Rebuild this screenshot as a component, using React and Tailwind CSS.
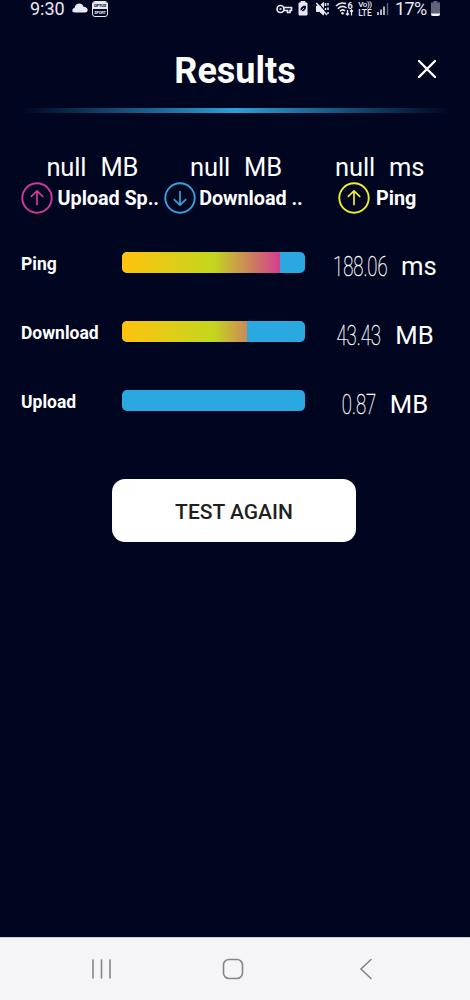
import React from "react";

function StatusBar() {
  return (
    <div className="flex h-[18px] items-start justify-between pl-[30px] pr-[30px] text-[#e9e9f3]">
      <div className="flex">
        <span className="w-[36px] text-[18px] leading-[18px]">9:30</span>
        <svg className="ml-[6px] mt-[3px]" width="16" height="10" viewBox="0 0 16 10" fill="currentColor">
          <path d="M3 9.5C1.2 9.5.3 8.500.3 7.200.3 6 1.200 5 2.500 4.900 3 2 5 .5 7.300.5 9.500.5 11 1.800 11.600 3.800 14 3.800 15.700 5.200 15.700 7 15.700 8.600 14.700 9.500 13 9.500Z" />
        </svg>
        <span className="ml-[4px] mt-px flex h-[16px] w-[16px] flex-col overflow-hidden rounded-[3px] border border-[#e9e9f3] text-center text-[4px] font-bold leading-[7px]">
          <span className="h-[7px] bg-[#e9e9f3] tracking-[-0.2px] text-[#000520]">OPTUS</span>
          <span className="tracking-[-0.2px]">SPORT</span>
        </span>
      </div>
      <div className="flex">
        <svg width="119" height="18" viewBox="0 0 119 18" fill="none" stroke="currentColor">
          <g strokeWidth="1.700">
            <circle cx="4.500" cy="9" r="3.500" />
            <path d="M7.500 7.500H15.500V10.500H14V12.500H11.500V10.500H7.500" />
            <path d="M3.500 9H5.500" />
          </g>
          <path d="M25 3V1.500H29V3H31V15H23V3Z" fill="currentColor" />
          <path d="M25 10.500C24.500 7.500 26.500 6 29.500 6 30 9.500 28 11.500 25.500 10.500Z" fill="#000520" stroke="#000520" strokeWidth=".8" />
          <path d="M24.500 11.500 28 8" strokeWidth=".8" />
          <path d="M40.500 6H43.500L47.500 2.500V15L43.500 11.500H40.500Z" fill="currentColor" />
          <path d="M41 1.500 52 14" stroke="#000520" strokeWidth="1.200" />
          <path d="M40.300 3 51 15" strokeWidth="1.500" />
          <path d="M49.500 3V6M49.500 8V10M52 3V5.500M52 7.500V10M52 12V14" strokeWidth="1.500" />
          <path d="M60 6C63 3 67 2.500 70 3.800M61.800 8.700C64.500 6 68 6 70.500 8M64 11.300C65.500 9.700 67.500 9.700 69 11" strokeWidth="1.600" />
          <circle cx="66.500" cy="13.300" r="1.300" fill="currentColor" stroke="none" />
          <path d="M71.500 10V15M70 13.500 71.500 15 73 13.500M75.500 15.500V10M74 11.500 75.500 10 77 11.500" strokeWidth="1.300" />
          <text x="71.500" y="8.500" fontSize="9" fontWeight="700" fill="currentColor" stroke="none">6</text>
        </svg>
        <span className="ml-[-37px] mt-px flex h-[16px] w-[14px] flex-col items-center text-[8px] font-medium">
          <span className="h-[8px] leading-[8px] tracking-[-0.4px]">Vo))</span>
          <span className="h-[8px] text-[8.5px] leading-[8px]">LTE</span>
        </span>
        <svg className="ml-[4px]" width="15" height="18" viewBox="0 0 15 18" stroke="currentColor" strokeWidth="1.500">
          <path d="M2 12V15M5 9.500V15M8 6.500V15" />
          <path d="M11.500 3V15" opacity=".4" />
        </svg>
        <span className="ml-[4px] w-[35px] whitespace-nowrap text-[18px] leading-[18px] tracking-[-0.6px]">17%</span>
        <svg className="ml-px mt-px" width="9" height="15" viewBox="0 0 9 15">
          <path d="M2.500 0H6.500V1.500H9V13Q9 15 7 15H2Q0 15 0 13V1.500H2.500Z" fill="#62627a" />
          <path d="M0 12.500H9V13Q9 15 7 15H2Q0 15 0 13Z" fill="#f3f3f8" />
        </svg>
      </div>
    </div>
  );
}

function ArrowCircle({ color, down = false }) {
  return (
    <svg className="shrink-0" width="32" height="32" viewBox="0 0 32 32" fill="none" stroke={color}>
      <circle cx="16" cy="16" r="14.700" strokeWidth="1.900" />
      <path
        d={down ? "M16 9V23M9.800 17.200 16 23 22.200 17.200" : "M16 23.300V9M9.800 14.800 16 9 22.200 14.800"}
        strokeWidth="1.700"
      />
    </svg>
  );
}

function Summary({ unit, label, color, down, gap }) {
  return (
    <div className="flex flex-col items-center">
      <div className="flex h-[30px] gap-[14px] pl-[5px] text-[25.5px] leading-[30px] tracking-[-0.15px]">
        <span>null</span>
        <span>{unit}</span>
      </div>
      <div className={`flex h-[32px] items-center whitespace-nowrap text-[19.8px] font-bold tracking-[-0.05px] ${gap}`}>
        <ArrowCircle color={color} down={down} />
        <span className="pt-px leading-[33px]">{label}</span>
      </div>
    </div>
  );
}

function Meter({ label, value, unit, fill, numberBox }) {
  return (
    <div className="flex h-[69px] items-start">
      <span className="w-[101px] text-[17.5px] font-bold leading-[27px]">{label}</span>
      <div className="mt-px h-[21px] w-[183px] overflow-hidden rounded-[5px] bg-[#2aa9e0]">
        <div className={`h-full overflow-hidden ${fill}`}>
          <div className="h-full w-[158px] bg-[linear-gradient(90deg,#ffc20e_0%,#c4d61e_58%,#d43d91_100%)]" />
        </div>
      </div>
      <div className="flex h-[32px] w-[160px] justify-center gap-[14px] leading-[31px]">
        <span className={`flex justify-center ${numberBox}`}>
          <span className="origin-center scale-x-[0.66] whitespace-nowrap text-[28px] font-thin [-webkit-text-stroke:0.35px_white]">{value}</span>
        </span>
        <span className="text-[25.7px]">{unit}</span>
      </div>
    </div>
  );
}

export default function App() {
  return (
    <main className="flex h-[1000px] w-[470px] flex-col overflow-hidden bg-[#000520] font-['Roboto',sans-serif] text-white">
      <StatusBar />
      <header className="flex h-[90px] items-start pl-[33px] pr-[33px] pt-[32px]">
        <span className="w-[20px]" />
        <h1 className="flex-1 text-center text-[36px] font-bold leading-[42px]">Results</h1>
        <svg className="mt-[9px]" width="20" height="20" viewBox="0 0 20 20" fill="none" stroke="white" strokeWidth="2.400" strokeLinecap="round">
          <path d="M2 2 18 18M18 2 2 18" />
        </svg>
      </header>
      <div className="mx-[20px] h-[5px] bg-[linear-gradient(90deg,transparent,#2d9ed8_50%,transparent)]" />
      <section className="ml-[18px] mt-[39px] grid w-[431px] grid-cols-3">
        <Summary unit="MB" label="Upload Sp.." color="#d43a9b" gap="gap-[5px]" />
        <Summary unit="MB" label="Download .." color="#36a3dc" gap="gap-[3px]" down />
        <Summary unit="ms" label="Ping" color="#f0f02c" gap="gap-[6px]" />
      </section>
      <section className="ml-[21px] mt-[37px] flex flex-col">
        <Meter label="Ping" value="188.06" unit="ms" fill="w-[158px]" numberBox="w-[54px]" />
        <Meter label="Download" value="43.43" unit="MB" fill="w-[125px]" numberBox="w-[45px]" />
        <Meter label="Upload" value="0.87" unit="MB" fill="w-0" numberBox="w-[34px]" />
      </section>
      <button className="ml-[112px] mt-[21px] h-[63px] w-[244px] rounded-[13px] bg-white pt-[3px] text-[21px] font-medium leading-[25px] text-[#1f1f1f]">
        TEST AGAIN
      </button>
      <nav className="mt-auto flex h-[63px] items-center border-t border-[#cfd0d6] bg-[#f5f5f8] pl-[91px]">
        <svg width="21" height="22" viewBox="0 0 21 22" stroke="#858587" strokeWidth="1.600" strokeLinecap="round">
          <path d="M2 2V20M10.500 2V20M19 2V20" />
        </svg>
        <svg className="ml-[110px]" width="22" height="22" viewBox="0 0 22 22" fill="none" stroke="#858587" strokeWidth="1.600">
          <rect x="1.500" y="1.500" width="19" height="19" rx="5.500" />
        </svg>
        <svg className="ml-[115px]" width="14" height="22" viewBox="0 0 14 22" fill="none" stroke="#858587" strokeWidth="1.600" strokeLinecap="round">
          <path d="M12 1.500 2 11 12 20.500" />
        </svg>
      </nav>
    </main>
  );
}
